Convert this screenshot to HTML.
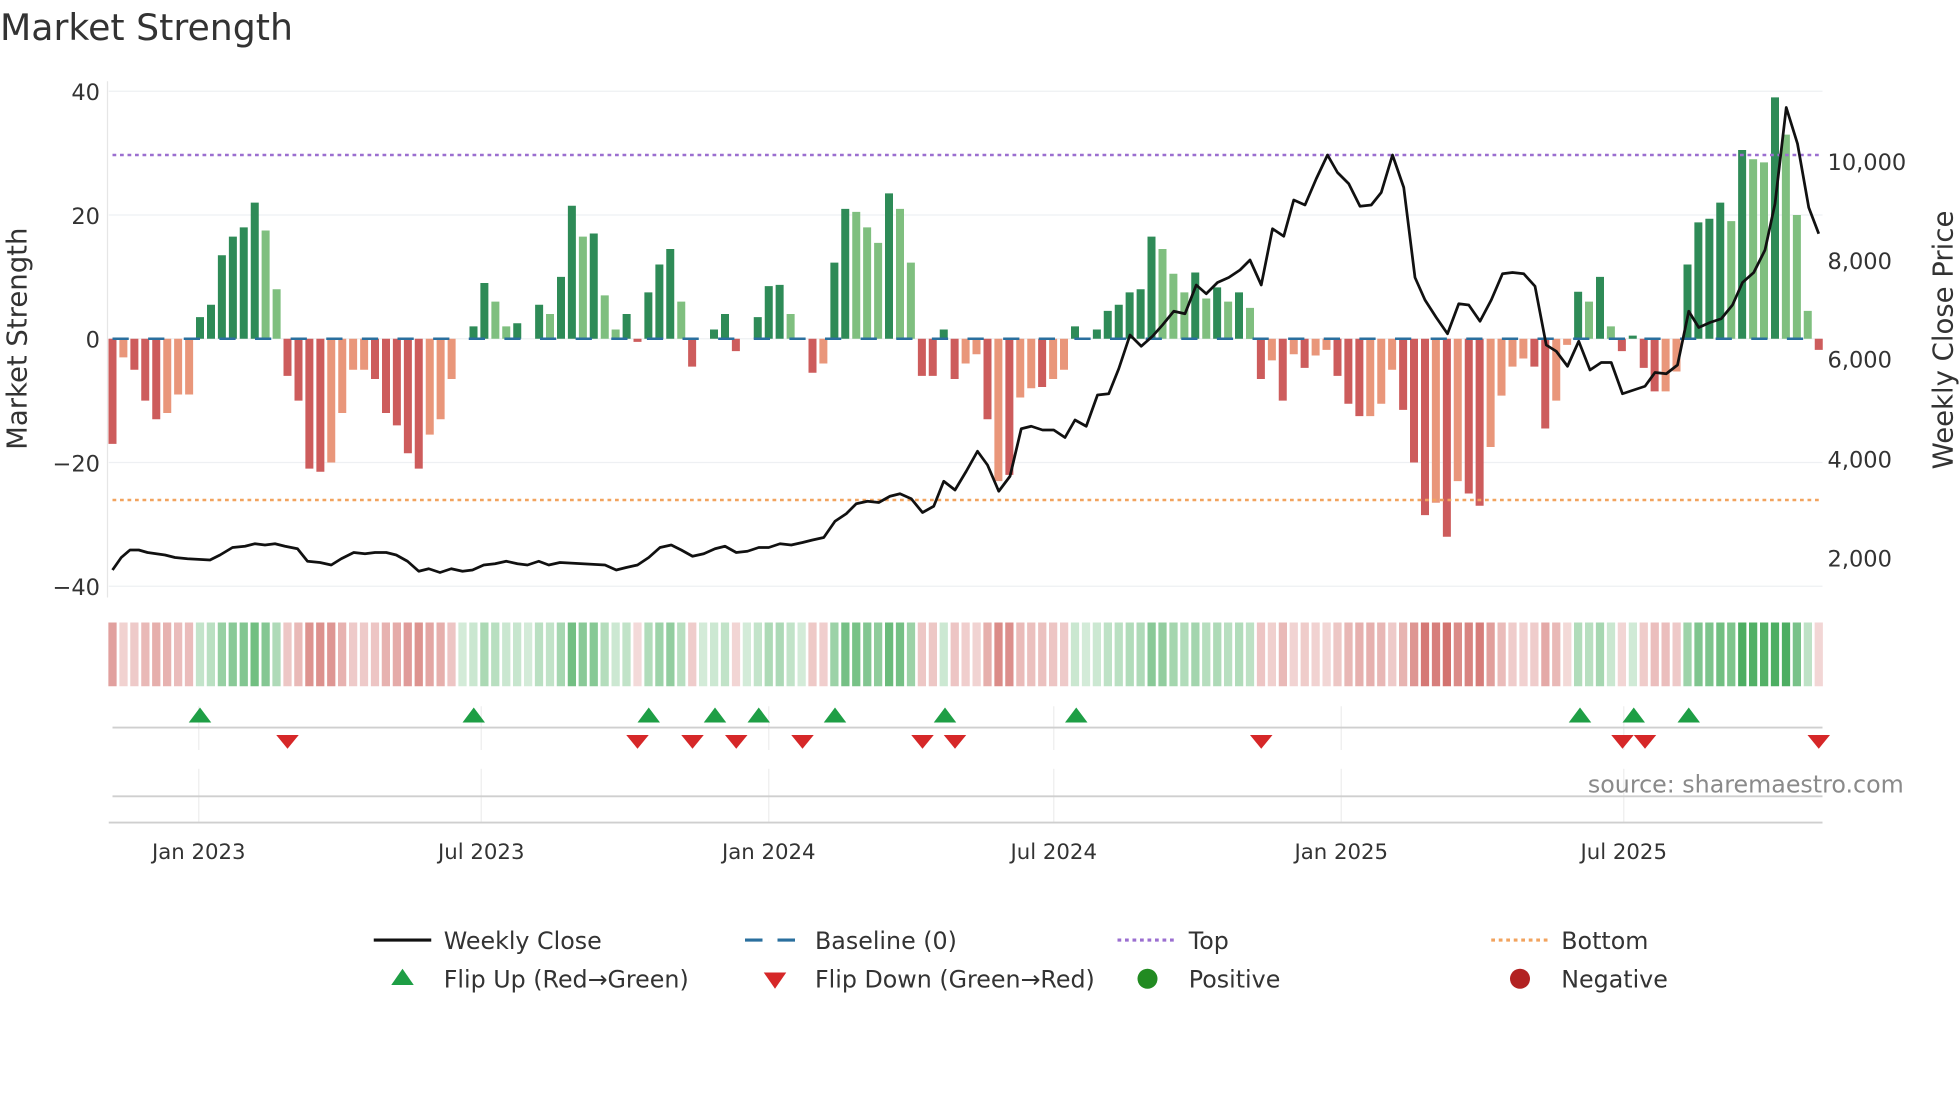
<!DOCTYPE html>
<html><head><meta charset="utf-8"><style>
html,body{margin:0;padding:0;background:#fff;width:1960px;height:1102px;overflow:hidden}
svg{display:block;font-family:"DejaVu Sans","Liberation Sans",sans-serif}
</style></head><body>
<svg id="s" width="1960" height="1102" viewBox="0 0 1568 881.6" xmlns="http://www.w3.org/2000/svg">
<rect width="1568" height="882" fill="#fff"/>
<text x="0" y="32" font-size="29" fill="#333">Market Strength</text>
<g stroke="#eef0f3" stroke-width="1">
<line x1="87" x2="1458" y1="73" y2="73"/><line x1="87" x2="1458" y1="172" y2="172"/><line x1="87" x2="1458" y1="271" y2="271"/><line x1="87" x2="1458" y1="370" y2="370"/><line x1="87" x2="1458" y1="469" y2="469"/>
</g>
<line x1="86" x2="86" y1="65" y2="478" stroke="#e6e6e6"/>
<g font-size="18" fill="#333" text-anchor="end">
<text x="80" y="80">40</text><text x="80" y="179">20</text><text x="80" y="278">0</text><text x="80" y="377">−20</text><text x="80" y="476">−40</text>
</g>
<g font-size="18" fill="#333">
<text x="1462" y="136">10,000</text><text x="1462" y="215">8,000</text><text x="1462" y="294">6,000</text><text x="1462" y="374">4,000</text><text x="1462" y="453">2,000</text>
</g>
<text transform="translate(21,271) rotate(-90)" font-size="22" fill="#333" text-anchor="middle">Market Strength</text>
<text transform="translate(1562,272) rotate(-90)" font-size="22" fill="#333" text-anchor="middle">Weekly Close Price</text>
<g id="bars"></g>
<line x1="90" x2="1458" y1="271" y2="271" stroke="#2a6f9e" stroke-width="2" stroke-dasharray="13 15.5"/>
<line x1="90" x2="1458" y1="124" y2="124" stroke="#9b6fd0" stroke-width="2" stroke-dasharray="3 3"/>
<line x1="90" x2="1458" y1="400" y2="400" stroke="#f2a35e" stroke-width="2" stroke-dasharray="3 3"/>
<polyline id="pl" fill="none" stroke="#111" stroke-width="2.2" stroke-linejoin="round"/>
<g id="heat"></g>
<g stroke="#eeeeee" stroke-width="1">
<line x1="159" x2="159" y1="565" y2="600"/><line x1="385" x2="385" y1="565" y2="600"/><line x1="615" x2="615" y1="565" y2="600"/><line x1="843" x2="843" y1="565" y2="600"/><line x1="1073" x2="1073" y1="565" y2="600"/><line x1="1299" x2="1299" y1="565" y2="600"/>
<line x1="159" x2="159" y1="615" y2="658"/><line x1="385" x2="385" y1="615" y2="658"/><line x1="615" x2="615" y1="615" y2="658"/><line x1="843" x2="843" y1="615" y2="658"/><line x1="1073" x2="1073" y1="615" y2="658"/><line x1="1299" x2="1299" y1="615" y2="658"/>
</g>
<line x1="90" x2="1458" y1="582" y2="582" stroke="#cfcfcf" stroke-width="1.5"/>
<line x1="90" x2="1458" y1="637" y2="637" stroke="#cfcfcf" stroke-width="1.5"/>
<line x1="87" x2="1458" y1="658" y2="658" stroke="#cfcfcf" stroke-width="1.5"/>
<g id="mk"></g>
<text x="1523" y="634" font-size="19" fill="#8a8a8a" text-anchor="end">source: sharemaestro.com</text>
<g font-size="17" fill="#333" text-anchor="middle">
<text x="159" y="687">Jan 2023</text><text x="385" y="687">Jul 2023</text><text x="615" y="687">Jan 2024</text><text x="843" y="687">Jul 2024</text><text x="1073" y="687">Jan 2025</text><text x="1299" y="687">Jul 2025</text>
</g>
<g font-size="19" fill="#333">
<line x1="299" x2="345" y1="752" y2="752" stroke="#111" stroke-width="2.5"/><text x="355" y="759">Weekly Close</text>
<line x1="596" x2="642" y1="752" y2="752" stroke="#2a6f9e" stroke-width="2.5" stroke-dasharray="14 12"/><text x="652" y="759">Baseline (0)</text>
<line x1="894" x2="940" y1="752" y2="752" stroke="#9b6fd0" stroke-width="2.5" stroke-dasharray="3 3"/><text x="951" y="759">Top</text>
<line x1="1193" x2="1239" y1="752" y2="752" stroke="#f2a35e" stroke-width="2.5" stroke-dasharray="3 3"/><text x="1249" y="759">Bottom</text>
<polygon points="313,788 331,788 322,775" fill="#1e9e45"/><text x="355" y="790">Flip Up (Red→Green)</text>
<polygon points="611,778 629,778 620,791" fill="#d62728"/><text x="652" y="790">Flip Down (Green→Red)</text>
<circle cx="918" cy="783" r="8" fill="#228b22"/><text x="951" y="790">Positive</text>
<circle cx="1216" cy="783" r="8" fill="#b22222"/><text x="1249" y="790">Negative</text>
</g>
</svg>
<script>
var v=[[-17,'R'],[-3,'O'],[-5,'R'],[-10,'R'],[-13,'R'],[-12,'O'],[-9,'O'],[-9,'O'],[3.5,'D'],[5.5,'D'],[13.5,'D'],[16.5,'D'],[18,'D'],[22,'D'],[17.5,'L'],[8,'L'],[-6,'R'],[-10,'R'],[-21,'R'],[-21.5,'R'],[-20,'O'],[-12,'O'],[-5,'O'],[-5,'O'],[-6.5,'R'],[-12,'R'],[-14,'R'],[-18.5,'R'],[-21,'R'],[-15.5,'O'],[-13,'O'],[-6.5,'O'],[0,'D'],[2,'D'],[9,'D'],[6,'L'],[2,'L'],[2.5,'D'],[0,'D'],[5.5,'D'],[4,'L'],[10,'D'],[21.5,'D'],[16.5,'L'],[17,'D'],[7,'L'],[1.5,'L'],[4,'D'],[-0.5,'R'],[7.5,'D'],[12,'D'],[14.5,'D'],[6,'L'],[-4.5,'R'],[0,'D'],[1.5,'D'],[4,'D'],[-2,'R'],[0,'D'],[3.5,'D'],[8.5,'D'],[8.7,'D'],[4,'L'],[0,'D'],[-5.5,'R'],[-4,'O'],[12.3,'D'],[21,'D'],[20.5,'L'],[18,'L'],[15.5,'L'],[23.5,'D'],[21,'L'],[12.3,'L'],[-6,'R'],[-6,'R'],[1.5,'D'],[-6.5,'R'],[-4,'O'],[-2.5,'O'],[-13,'R'],[-23,'O'],[-22,'R'],[-9.5,'O'],[-8,'O'],[-7.8,'R'],[-6.5,'O'],[-5,'O'],[2,'D'],[0,'D'],[1.5,'D'],[4.5,'D'],[5.5,'D'],[7.5,'D'],[8,'D'],[16.5,'D'],[14.5,'L'],[10.5,'L'],[7.5,'L'],[10.7,'D'],[6.5,'L'],[8.3,'D'],[6,'L'],[7.5,'D'],[5,'L'],[-6.5,'R'],[-3.5,'O'],[-10,'R'],[-2.5,'O'],[-4.7,'R'],[-2.7,'O'],[-1.8,'O'],[-6,'R'],[-10.5,'R'],[-12.5,'R'],[-12.5,'O'],[-10.5,'O'],[-5,'O'],[-11.5,'R'],[-20,'R'],[-28.5,'R'],[-26.5,'O'],[-32,'R'],[-23,'O'],[-25,'R'],[-27,'R'],[-17.5,'O'],[-9.2,'O'],[-4.5,'O'],[-3.2,'O'],[-4.5,'R'],[-14.5,'R'],[-10,'O'],[-1,'O'],[7.6,'D'],[6,'L'],[10,'D'],[2,'L'],[-2,'R'],[0.5,'D'],[-4.7,'R'],[-8.5,'R'],[-8.5,'O'],[-5.3,'O'],[12,'D'],[18.8,'D'],[19.4,'D'],[22,'D'],[19,'L'],[30.5,'D'],[29,'L'],[28.5,'L'],[39,'D'],[33,'L'],[20,'L'],[4.5,'L'],[-1.8,'R']];
var C={D:'#2e8b57',L:'#7fbf7f',R:'#cd5c5c',O:'#e9967a'};
var b='',h='',n=v.length,st=(1455-90)/(n-1);
for(var i=0;i<n;i++){var x=90+i*st,val=v[i][0],y0=271,yy=271-val*4.95;
if(val!=0)b+='<rect x="'+(x-3.2).toFixed(1)+'" y="'+Math.min(y0,yy).toFixed(1)+'" width="6.4" height="'+Math.abs(yy-y0).toFixed(1)+'" fill="'+C[v[i][1]]+'"/>';
var a=Math.min(1,0.25+Math.abs(val)/40);var col=val>=0?'rgba(46,160,70,'+(a*0.85)+')':'rgba(200,80,75,'+(a*0.8)+')';
h+='<rect x="'+(x-3.3).toFixed(1)+'" y="498" width="6.6" height="51" fill="'+col+'"/>';}
document.getElementById('bars').innerHTML=b;document.getElementById('heat').innerHTML=h;
var p=[90,456,97,446,104,440,111,440,118,442,125,443,132,444,140,446,150,447,168,448,176,444,186,438,196,437,204,435,212,436,220,435,228,437,238,439,246,449,256,450,265,452,273,447,283,442,292,443,300,442,309,442,317,444,326,449,335,457,343,455,352,458,361,455,370,457,378,456,387,452,396,451,405,449,414,451,422,452,431,449,439,452,448,450,466,451,484,452,493,456,501,454,510,452,519,446,528,438,537,436,545,440,554,445,563,443,572,439,580,437,589,442,598,441,607,438,615,438,624,435,633,436,642,434,650,432,659,430,668,417,677,411,685,403,694,401,703,402,712,397,720,395,729,399,738,410,747,405,755,385,764,392,773,377,782,361,790,372,799,393,808,381,817,343,825,341,834,344,843,344,852,350,860,336,869,341,878,316,887,315,895,295,904,268,913,277,922,269,930,260,939,249,948,251,957,228,965,235,974,226,983,222,992,216,1000,208,1009,228,1018,183,1027,189,1035,160,1044,164,1053,143,1062,124,1070,138,1079,147,1088,165,1097,164,1105,154,1114,124,1123,150,1132,222,1140,240,1149,254,1158,267,1167,243,1175,244,1184,257,1193,240,1202,219,1210,218,1219,219,1228,229,1237,276,1245,281,1254,293,1263,273,1272,296,1281,290,1289,290,1298,315,1307,312,1316,309,1324,298,1333,299,1342,292,1351,249,1359,262,1368,258,1377,255,1386,244,1394,226,1403,218,1412,200,1420,163,1429,86,1438,115,1447,166,1455,187];
var s='';for(var i=0;i<p.length;i+=2)s+=p[i]+','+p[i+1]+' ';document.getElementById('pl').setAttribute('points',s);
var up=[160,379,519,572,607,668,756,861,1264,1307,1351],dn=[230,510,554,589,642,738,764,1009,1298,1316,1455],m='';
up.forEach(function(x){m+='<polygon points="'+(x-9)+',578 '+(x+9)+',578 '+x+',566" fill="#1e9e45"/>'});
dn.forEach(function(x){m+='<polygon points="'+(x-9)+',588 '+(x+9)+',588 '+x+',599" fill="#d62728"/>'});
document.getElementById('mk').innerHTML=m;
</script>
</body></html>
